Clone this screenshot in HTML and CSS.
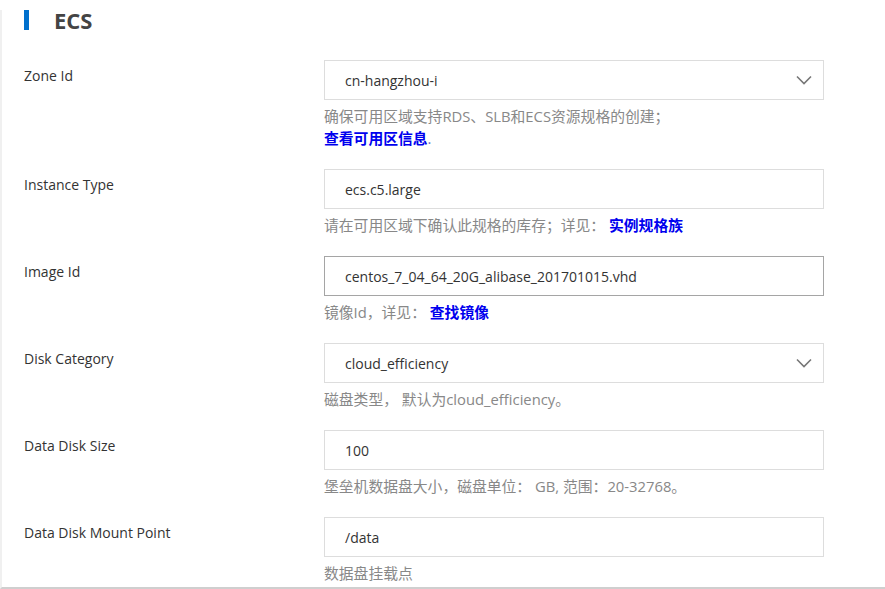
FILE: index.html
```html
<!DOCTYPE html>
<html lang="zh-CN">
<head>
    <meta charset="UTF-8">
    <meta name="viewport" content="width=device-width, initial-scale=1.0">
    <title>ECS</title>
    <link rel="stylesheet" href="styles.css">
</head>
<body>
    <div class="panel">
        <h2 class="section-title"><span class="bar"></span>ECS</h2>

        <div class="form-row">
            <label class="field-label">Zone Id</label>
            <div class="field">
                <div class="input select">
                    <span>cn-hangzhou-i</span>
                    <svg class="chevron" width="16" height="10" viewBox="0 0 16 10"><path d="M1 1.5 L8 8.5 L15 1.5" fill="none" stroke="#777" stroke-width="1.6"/></svg>
                </div>
                <p class="help">确保可用区域支持RDS、SLB和ECS资源规格的创建；</p>
                <p class="help"><a class="link" href="#">查看可用区信息</a><span class="dot">.</span></p>
            </div>
        </div>

        <div class="form-row">
            <label class="field-label">Instance Type</label>
            <div class="field">
                <div class="input"><span>ecs.c5.large</span></div>
                <p class="help">请在可用区域下确认此规格的库存；详见： <a class="link" href="#">实例规格族</a></p>
            </div>
        </div>

        <div class="form-row">
            <label class="field-label">Image Id</label>
            <div class="field">
                <div class="input active"><span>centos_7_04_64_20G_alibase_201701015.vhd</span></div>
                <p class="help">镜像Id，详见： <a class="link" href="#">查找镜像</a></p>
            </div>
        </div>

        <div class="form-row">
            <label class="field-label">Disk Category</label>
            <div class="field">
                <div class="input select">
                    <span>cloud_efficiency</span>
                    <svg class="chevron" width="16" height="10" viewBox="0 0 16 10"><path d="M1 1.5 L8 8.5 L15 1.5" fill="none" stroke="#777" stroke-width="1.6"/></svg>
                </div>
                <p class="help">磁盘类型， 默认为cloud_efficiency。</p>
            </div>
        </div>

        <div class="form-row">
            <label class="field-label">Data Disk Size</label>
            <div class="field">
                <div class="input"><span>100</span></div>
                <p class="help">堡垒机数据盘大小，磁盘单位： GB, 范围：20-32768。</p>
            </div>
        </div>

        <div class="form-row">
            <label class="field-label">Data Disk Mount Point</label>
            <div class="field">
                <div class="input"><span>/data</span></div>
                <p class="help">数据盘挂载点</p>
            </div>
        </div>
    </div>
</body>
</html>
```

FILE: styles.css
```css
* {
    margin: 0;
    padding: 0;
    box-sizing: border-box;
}

body {
    font-family: 'Open Sans', 'Noto Sans CJK SC', sans-serif;
    font-size: 14px;
    color: #333;
    background: #fff;
    height: 589px;
    overflow: hidden;
}

.panel {
    display: flow-root;
    margin-top: 10px;
    border-left: 2px solid #f0f0f0;
    border-bottom: 2px solid #cfcfcf;
    height: 579px;
    padding-left: 22px;
}

.section-title {
    display: flex;
    align-items: center;
    margin-top: -5px;
    line-height: 30px;
    font-size: 22px;
    font-weight: 700;
    color: #444;
    margin-bottom: 25px;
}

.bar {
    display: block;
    width: 5px;
    height: 20px;
    background: #0070cc;
    margin-right: 25px;
}

.form-row {
    display: flex;
    margin-bottom: 20px;
}

.field-label {
    width: 300px;
    padding-top: 5px;
    line-height: 22px;
    color: #333;
}

.field {
    width: 500px;
}

.input {
    height: 40px;
    border: 1px solid #ddd;
    display: flex;
    align-items: center;
    justify-content: space-between;
    padding: 0 11px 0 20px;
    color: #333;
    margin-bottom: 5px;
}

.input.active {
    border-color: #a5a5a5;
}

.chevron {
    display: block;
}

.help {
    font-size: 14.8px;
    line-height: 22px;
    color: #888;
}

.link {
    color: #0000ee;
    font-weight: 700;
    text-decoration: none;
}

.dot {
    color: #6670c0;
    font-weight: 400;
}
```
